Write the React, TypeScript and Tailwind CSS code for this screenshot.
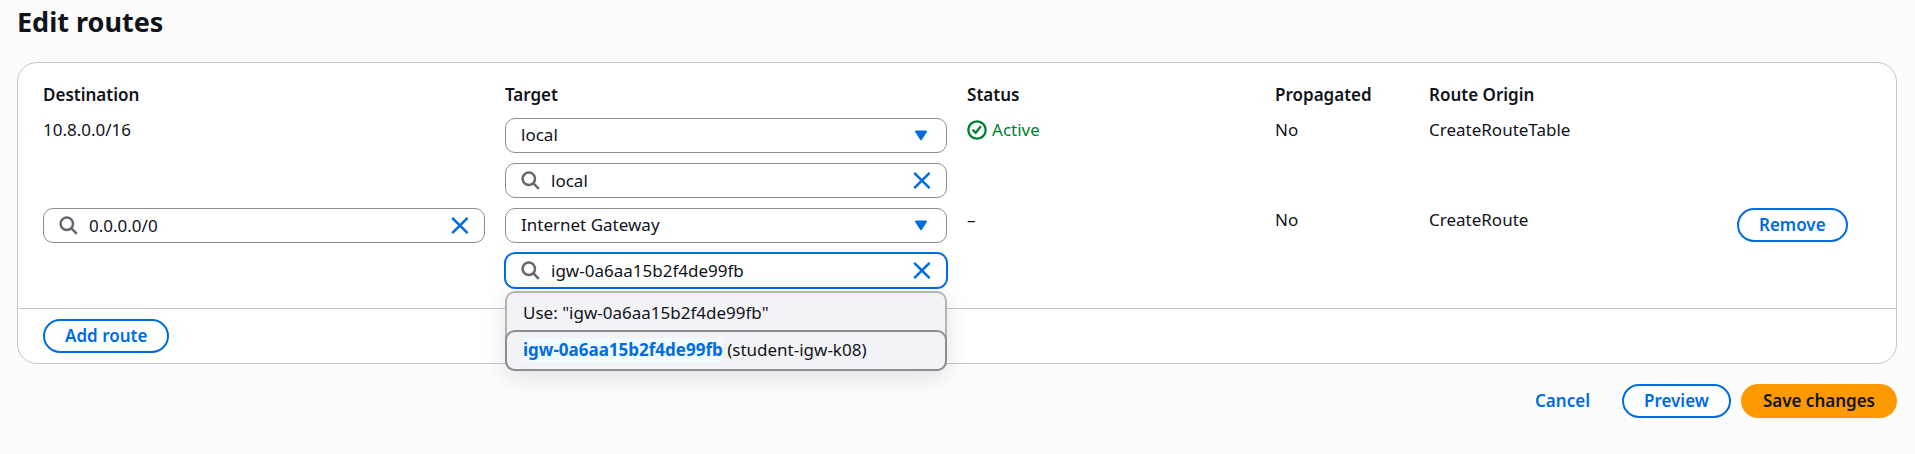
import { useState } from "react";
import type { ReactNode } from "react";

function SearchIcon() {
  return (
    <svg viewBox="0 0 20 20" className="size-5 shrink-0" fill="none" stroke="#656871" strokeWidth="2.5" aria-hidden="true">
      <circle cx="7.8" cy="7.8" r="6.2" />
      <path d="M12.2 12.2 17.8 17.8" />
    </svg>
  );
}

function CloseIcon() {
  return (
    <svg viewBox="0 0 20 20" className="size-5" fill="none" stroke="#006ce0" strokeWidth="2.5" aria-hidden="true">
      <path d="M3.2 1.8 18.6 17.2M18.6 1.8 3.2 17.2" />
    </svg>
  );
}

function CaretIcon() {
  return (
    <svg viewBox="0 0 20 20" className="size-5 shrink-0" fill="#006ce0" stroke="#006ce0" strokeWidth="2" strokeLinejoin="round" aria-hidden="true">
      <path d="M5 5.5h10l-5 7.6z" />
    </svg>
  );
}

function SuccessIcon() {
  return (
    <svg viewBox="0 0 20 20" className="size-5" fill="none" stroke="#00802f" strokeWidth="2.3" aria-hidden="true">
      <circle cx="10" cy="10" r="8.7" />
      <path d="m5.6 9.6 3.1 3.1 5.2-6.4" />
    </svg>
  );
}

function SearchField({ label, initial, active = false }: { label: string; initial: string; active?: boolean }) {
  const [value, setValue] = useState(initial);
  const look = active
    ? "border-[#006ce0] ring-1 ring-[#006ce0]"
    : "border-[#8c8c94]";
  return (
    <div className={`flex h-[35px] items-center rounded-[10px] border bg-white px-[15px] ${look}`}>
      <SearchIcon />
      <input
        aria-label={label}
        value={value}
        onChange={(e) => setValue(e.target.value)}
        className="ml-[10px] h-full min-w-0 flex-1 bg-transparent pb-px outline-none"
      />
      <button type="button" aria-label={`Clear ${label}`} onClick={() => setValue("")}>
        <CloseIcon />
      </button>
    </div>
  );
}

function SelectField({ label, initial }: { label: string; initial: string }) {
  return (
    <div className="grid items-center">
      <select
        aria-label={label}
        defaultValue={initial}
        className="col-start-1 row-start-1 h-[35px] w-full appearance-none rounded-[10px] border border-[#8c8c94] bg-white px-[15px] pb-[2px] outline-none"
      >
        <option>local</option>
        <option>Internet Gateway</option>
      </select>
      <span className="pointer-events-none col-start-1 row-start-1 mr-4 justify-self-end">
        <CaretIcon />
      </span>
    </div>
  );
}

function OutlineButton({ children }: { children: ReactNode }) {
  return (
    <button type="button" className="h-[34px] rounded-full border-2 border-[#006ce0] bg-white px-5 leading-5 font-semibold text-[#006ce0]">
      {children}
    </button>
  );
}

function Suggestions() {
  return (
    <ul
      role="listbox"
      aria-label="Gateway suggestions"
      className="absolute inset-x-0 top-full z-10 mt-[3px] rounded-[10px] border-2 border-[#b4b4bb] bg-[#f3f3f7] shadow-[0_5px_25px_rgba(0,7,22,0.12)]"
    >
      <li role="option" aria-selected="false" className="flex h-[39px] items-center px-4">
        Use: "igw-0a6aa15b2f4de99fb"
      </li>
      <li role="option" aria-selected="true" className="-mx-[2px] -mt-[2px] -mb-[2px] flex h-[41px] items-center rounded-[10px] border-2 border-[#8c8c94] bg-[#f3f3f7] px-4 pb-px whitespace-pre">
        <mark className="bg-[#f0fbff] font-bold text-[#006ce0]">igw-0a6aa15b2f4de99fb</mark> (student-igw-k08)
      </li>
    </ul>
  );
}

export default function App() {
  return (
    <main className="min-h-screen bg-[#fcfcfd] pt-1 pr-[18px] pl-[17px] font-['Noto_Sans',sans-serif] text-[17px] leading-[24px] text-[#0f141a]">
      <h1 className="text-[27px] leading-[36px] font-bold">Edit routes</h1>

      <section className="mt-[22px] rounded-[20px] border border-[#c6c6cd] bg-white">
        <div className="px-[25px] pt-5 pb-[10px]">
          <table className="w-[calc(100%+20px)] table-fixed text-left">
            <colgroup>
              <col className="w-3/12" />
              <col className="w-3/12" />
              <col className="w-2/12" />
              <col className="w-1/12" />
              <col className="w-2/12" />
              <col className="w-1/12" />
            </colgroup>
            <thead>
              <tr className="*:pr-5 *:pb-[11px] *:font-semibold">
                <th>Destination</th>
                <th>Target</th>
                <th>Status</th>
                <th>Propagated</th>
                <th>Route Origin</th>
                <td />
              </tr>
            </thead>
            <tbody className="align-top">
              <tr className="*:pr-5 *:pb-[10px]">
                <td>10.8.0.0/16</td>
                <td>
                  <div className="flex flex-col gap-[10px]">
                    <SelectField label="Target type for 10.8.0.0/16" initial="local" />
                    <SearchField label="Target for 10.8.0.0/16" initial="local" />
                  </div>
                </td>
                <td>
                  <span className="flex items-center gap-[5px] text-[#00802f]">
                    <SuccessIcon />
                    Active
                  </span>
                </td>
                <td>No</td>
                <td>CreateRouteTable</td>
                <td />
              </tr>
              <tr className="*:pr-5 *:pb-[10px]">
                <td>
                  <SearchField label="Destination" initial="0.0.0.0/0" />
                </td>
                <td>
                  <div className="flex flex-col gap-[10px]">
                    <SelectField label="Target type for 0.0.0.0/0" initial="Internet Gateway" />
                    <div className="relative">
                      <SearchField label="Target for 0.0.0.0/0" initial="igw-0a6aa15b2f4de99fb" active />
                      <Suggestions />
                    </div>
                  </div>
                </td>
                <td>–</td>
                <td>No</td>
                <td>CreateRoute</td>
                <td>
                  <OutlineButton>Remove</OutlineButton>
                </td>
              </tr>
            </tbody>
          </table>
        </div>
        <div className="flex border-t border-[#c6c6cd] px-[25px] py-[10px]">
          <OutlineButton>Add route</OutlineButton>
        </div>
      </section>

      <div className="mt-5 flex justify-end gap-[10px]">
        <button type="button" className="h-[34px] px-[22px] leading-5 font-semibold text-[#006ce0]">
          Cancel
        </button>
        <OutlineButton>Preview</OutlineButton>
        <button type="button" className="h-[34px] rounded-full bg-[#ff9900] px-[22px] leading-5 font-semibold">
          Save changes
        </button>
      </div>
    </main>
  );
}
